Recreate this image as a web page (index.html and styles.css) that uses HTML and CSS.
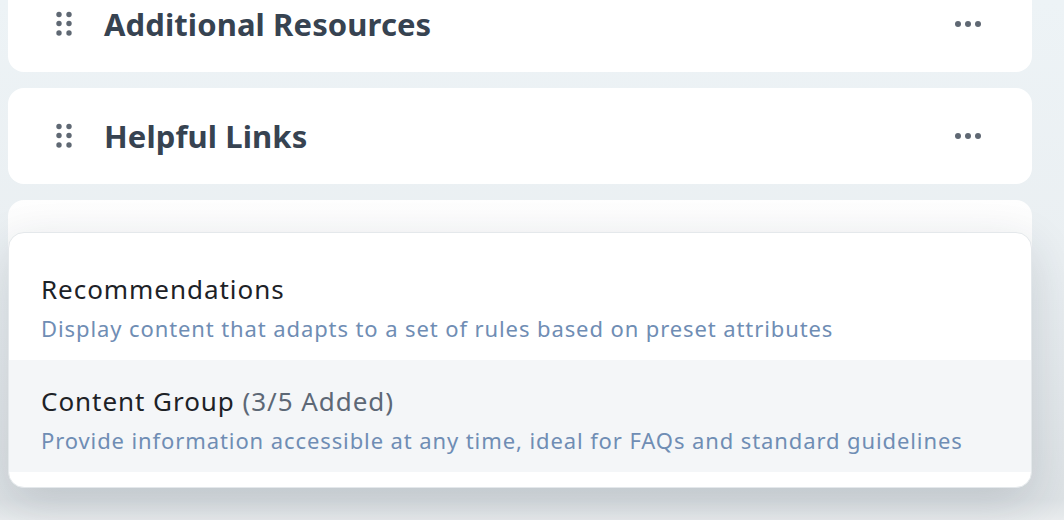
FILE: index.html
```html
<!DOCTYPE html>
<html lang="en">
<head>
    <meta charset="UTF-8">
    <title>Sections</title>
    <link rel="stylesheet" href="styles.css">
</head>
<body>

<div class="page">
    <div class="section-list">
        <div class="section-card">
            <svg class="drag-handle" width="18" height="26" viewBox="0 0 18 26">
                <circle cx="3" cy="3.5" r="2.7"/><circle cx="13" cy="3.5" r="2.7"/>
                <circle cx="3" cy="12.5" r="2.7"/><circle cx="13" cy="12.5" r="2.7"/>
                <circle cx="3" cy="22" r="2.7"/><circle cx="13" cy="22" r="2.7"/>
            </svg>
            <h2 class="section-title">Additional Resources</h2>
            <button class="more-btn" aria-label="More">
                <svg width="28" height="8" viewBox="0 0 28 8">
                    <circle cx="4" cy="4" r="3"/><circle cx="14" cy="4" r="3"/><circle cx="24" cy="4" r="3"/>
                </svg>
            </button>
        </div>

        <div class="section-card">
            <svg class="drag-handle" width="18" height="26" viewBox="0 0 18 26">
                <circle cx="3" cy="3.5" r="2.7"/><circle cx="13" cy="3.5" r="2.7"/>
                <circle cx="3" cy="12.5" r="2.7"/><circle cx="13" cy="12.5" r="2.7"/>
                <circle cx="3" cy="22" r="2.7"/><circle cx="13" cy="22" r="2.7"/>
            </svg>
            <h2 class="section-title">Helpful Links</h2>
            <button class="more-btn" aria-label="More">
                <svg width="28" height="8" viewBox="0 0 28 8">
                    <circle cx="4" cy="4" r="3"/><circle cx="14" cy="4" r="3"/><circle cx="24" cy="4" r="3"/>
                </svg>
            </button>
        </div>

        <div class="section-card add-card">
            <div class="add-menu">
                <div class="menu-item">
                    <div class="item-title">Recommendations</div>
                    <div class="item-desc">Display content that adapts to a set of rules based on preset attributes</div>
                </div>
                <div class="menu-item active">
                    <div class="item-title">Content Group <span class="item-count">(3/5 Added)</span></div>
                    <div class="item-desc">Provide information accessible at any time, ideal for FAQs and standard guidelines</div>
                </div>
            </div>
        </div>
    </div>
</div>

</body>
</html>
```

FILE: styles.css
```css
body {
    margin: 0;
    font-family: "Noto Sans", "Open Sans", sans-serif;
    background-color: #edf2f5;
    overflow: hidden;
}
.page {
    display: flow-root;
    height: 520px;
    padding: 0 32px 0 8px;
    background: linear-gradient(to bottom, #edf3f6 0%, #eaeff2 50%, #dde2e5 96%, #e9ecee 100%);
}
.section-list {
    display: flex;
    flex-direction: column;
    gap: 16px;
    margin-top: -24px;
}
.section-card {
    position: relative;
    display: flex;
    align-items: center;
    height: 96px;
    padding: 0 50px 0 48px;
    background-color: white;
    border-radius: 16px;
}
.drag-handle {
    fill: #5f6873;
    flex-shrink: 0;
}
.section-title {
    flex: 1;
    margin: 0 0 0 30px;
    font-size: 31px;
    font-weight: 700;
    letter-spacing: 0.1px;
    color: #374351;
}
.more-btn {
    display: flex;
    padding: 0;
    border: none;
    background: none;
    cursor: pointer;
}
.more-btn svg {
    fill: #5f6873;
}
.add-card {
    background: linear-gradient(to bottom, #fefefe, #f7f8f9);
}
.add-menu {
    position: absolute;
    top: 32px;
    left: 0;
    right: 0;
    padding: 15px 0;
    background-color: white;
    border-radius: 16px;
    border: 1px solid #e4e8eb;
    box-shadow: 0 16px 48px rgba(30, 45, 60, 0.16);
}
.menu-item {
    padding: 24px 32px 17px;
    cursor: pointer;
}
.menu-item.active {
    background-color: #f4f6f8;
}
.item-title {
    font-size: 26px;
    line-height: 34px;
    letter-spacing: 0.95px;
    color: #1d2227;
}
.item-count {
    color: #5d6876;
}
.item-desc {
    margin-top: 7px;
    font-size: 22px;
    line-height: 30px;
    letter-spacing: 0.9px;
    color: #6f8db4;
}
```
